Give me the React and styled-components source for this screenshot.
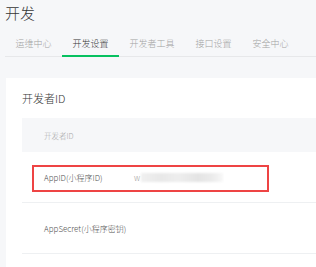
import React from 'react'
import styled, { createGlobalStyle } from 'styled-components'

const tabs = ['运维中心', '开发设置', '开发者工具', '接口设置', '安全中心']

export default function App() {
  return (
    <Page>
      <GlobalStyle />
      <Title>开发</Title>
      <TabBar>
        {tabs.map((t) => (
          <Tab key={t} active={t === '开发设置'}>{t}</Tab>
        ))}
      </TabBar>
      <Card>
        <Heading>开发者ID</Heading>
        <Table>
          <HeadRow>开发者ID</HeadRow>
          <Row>
            <Label>AppID(小程序ID)</Label>
            <Value>
              w<Blurred />
            </Value>
            <Highlight />
          </Row>
          <Row>
            <Label>AppSecret(小程序密钥)</Label>
          </Row>
        </Table>
      </Card>
    </Page>
  )
}

const GlobalStyle = createGlobalStyle`
  body{
    margin:0;
    background:#f6f7f9;
    font-family:"Noto Sans CJK SC", "Noto Sans", sans-serif;
    font-weight:300;
    color:#353535;
  }
`
const Page = styled.div`
  width:316px;
  height:267px;
  overflow:hidden;
`
const Title = styled.div`
  font-size:15px;
  line-height:20px;
  padding:3px 0 0 5px;
  height:30px;
  box-sizing:border-box;
`
const TabBar = styled.div`
  display:flex;
  margin:3px 0 0 5px;
  border-bottom:1px solid #e7e8ea;
`
const Tab = styled.div`
  padding:0 10.5px;
  font-size:9px;
  line-height:22px;
  margin-bottom:-1px;
  color:${(p) => (p.active ? '#353535' : '#a3a3a3')};
  border-bottom:2px solid ${(p) => (p.active ? '#07c160' : 'transparent')};
  white-space:nowrap;
`
const Card = styled.div`
  margin:21px 0 0 6px;
  background:#fff;
  padding:12px 0 0 16px;
  height:200px;
`
const Heading = styled.div`
  font-size:11px;
  line-height:16px;
  margin-bottom:12px;
`
const Table = styled.div`
  display:flex;
  flex-direction:column;
`
const HeadRow = styled.div`
  height:34px;
  background:#f6f7f9;
  display:flex;
  align-items:center;
  padding-left:22px;
  font-size:7.5px;
  color:#a8a8a8;
`
const Row = styled.div`
  position:relative;
  height:50px;
  display:flex;
  align-items:center;
  padding-left:22px;
  border-bottom:1px solid #eef0f2;
  font-size:8px;
`
const Label = styled.div`
  width:90px;
  flex-shrink:0;
  color:#505050;
`
const Value = styled.div`
  display:flex;
  align-items:center;
  color:#999;
`
const Blurred = styled.span`
  display:inline-block;
  width:82px;
  height:9px;
  margin-left:1px;
  background:linear-gradient(to right, #f0f0f0, #e8e8e8 25%, #eeeeee 45%, #e4e4e4 70%, #ececec 88%, #f8f8f8);
  filter:blur(0.8px);
`
const Highlight = styled.div`
  position:absolute;
  left:10px;
  top:13px;
  width:237px;
  height:27px;
  box-sizing:border-box;
  border:2px solid #ee4444;
`
